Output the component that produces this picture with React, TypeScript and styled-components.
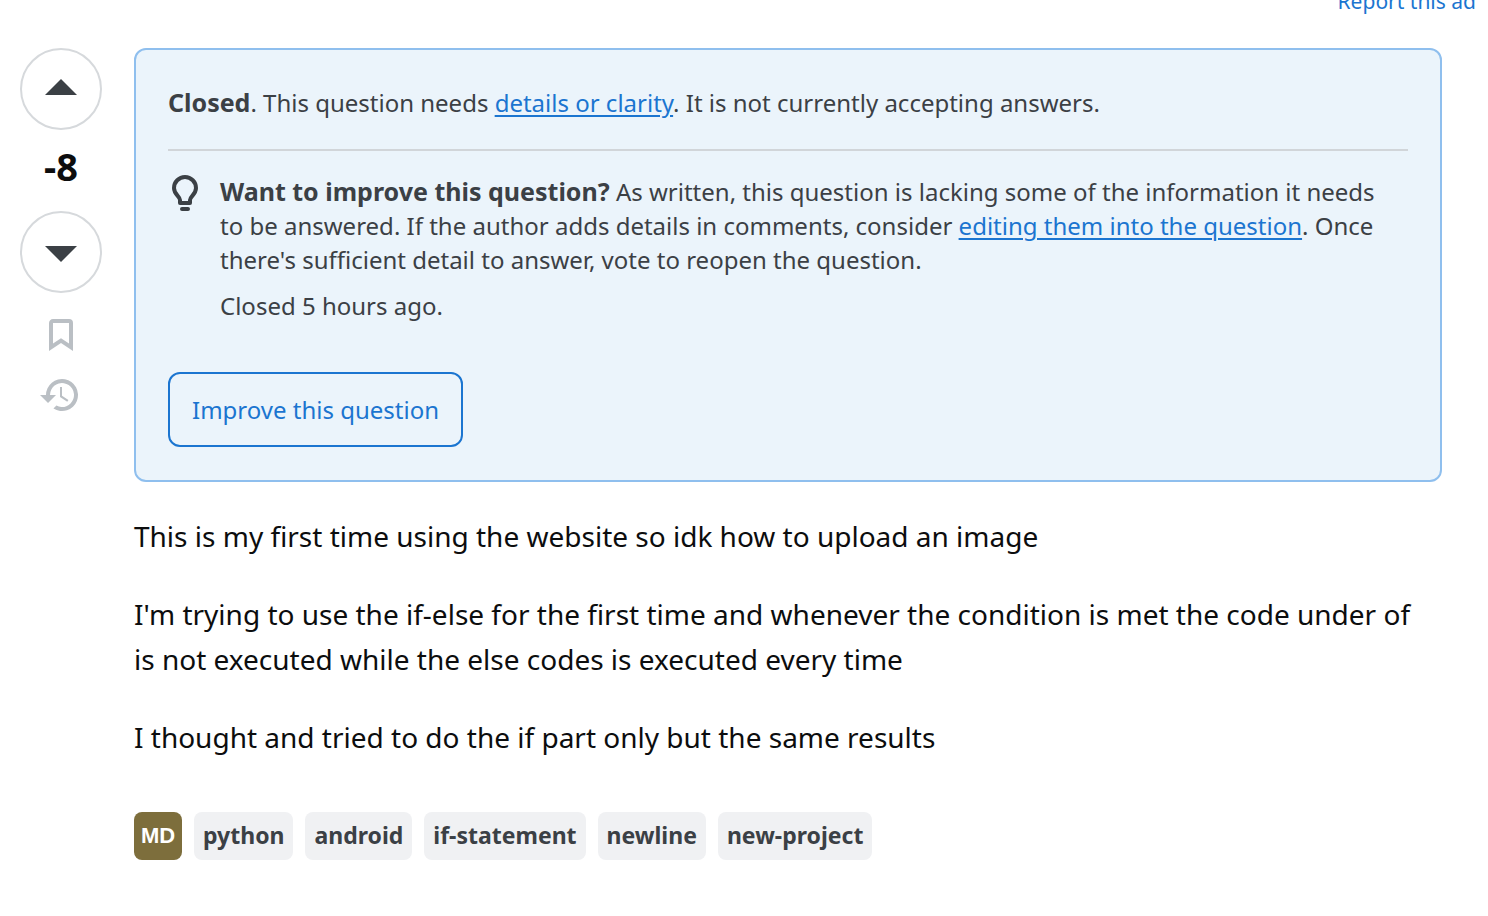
import React from "react";
import styled, { createGlobalStyle } from "styled-components";

const GlobalStyle = createGlobalStyle`
  *, *::before, *::after { box-sizing: border-box; }
  body {
    margin: 0;
    background: #fff;
    color: #0c0d0e;
    font-family: "Segoe UI", "Noto Sans", "Open Sans", sans-serif;
  }
`;

const AdBar = styled.div`
  display: flex;
  justify-content: flex-end;
  align-items: flex-end;
  height: 16px;
  padding-right: 12px;
  overflow: hidden;
`;

const AdLink = styled.a`
  color: #1b75d0;
  font-size: 21px;
  line-height: 30px;
  text-decoration: none;
`;

const Question = styled.main`
  display: grid;
  grid-template-columns: 82px minmax(0, 1fr);
  column-gap: 32px;
  padding: 32px 46px 32px 20px;
`;

const VoteColumn = styled.div`
  display: flex;
  flex-direction: column;
  align-items: center;
`;

const VoteButton = styled.button`
  display: flex;
  align-items: center;
  justify-content: center;
  width: 82px;
  height: 82px;
  padding: 0;
  border: 2px solid #d6d9dc;
  border-radius: 50%;
  background: #fff;
  color: #3b4045;
  cursor: pointer;
`;

const Score = styled.div`
  padding: 12px 0 21px;
  font-size: 38px;
  font-weight: 700;
  line-height: 48px;
`;

const IconButton = styled.button`
  display: flex;
  padding: 12px 0;
  border: 0;
  background: none;
  color: #babfc4;
  cursor: pointer;

  ${VoteButton} + & {
    margin-top: 12px;
  }
`;

const Icon = styled.svg`
  display: block;
  flex: none;
  fill: currentColor;
`;

const Notice = styled.aside`
  padding: 36px 32px 33px;
  border: 2px solid #8fbfee;
  border-radius: 12px;
  background: #ebf4fb;
  color: #3b4045;
  font-size: 24px;
  line-height: 34px;
`;

const NoticeText = styled.p`
  margin: 0;
`;

const Lead = styled.b`
  font-size: 25px;
  line-height: 30px;
`;

const Divider = styled.hr`
  height: 2px;
  margin: 29px 0 24px;
  border: 0;
  background: #d1d5d9;
`;

const Advice = styled.div`
  display: flex;
  gap: 16px;
  padding-right: 24px;
`;

const AdviceBody = styled.div`
  display: grid;
  gap: 12px;
  min-width: 0;
`;

const TextLink = styled.a`
  color: #1b75d0;
  text-decoration: underline;
  text-decoration-thickness: 2px;
  text-underline-offset: 3px;
`;

const ImproveButton = styled.button`
  height: 75px;
  margin-top: 49px;
  padding: 0 22px;
  border: 2px solid #1b75d0;
  border-radius: 12px;
  background: transparent;
  color: #1b75d0;
  font: inherit;
  cursor: pointer;
`;

const Post = styled.div`
  padding: 32px 8px 0 0;
  font-size: 28px;
  line-height: 45px;
`;

const Paragraph = styled.p`
  margin: 0 0 33px;
`;

const Tags = styled.div`
  display: flex;
  flex-wrap: wrap;
  gap: 12px;
  padding-top: 19px;
`;

const Badge = styled.a`
  width: 48px;
  border-radius: 8px;
  background: #7d6e3c;
  color: #fff;
  font-family: "Liberation Sans", sans-serif;
  font-size: 22px;
  font-weight: 700;
  line-height: 48px;
  text-align: center;
  text-decoration: none;
`;

const Tag = styled.a`
  padding: 0 9px 2px;
  border-radius: 8px;
  background: #f0f1f3;
  color: #3b4045;
  font-size: 23px;
  font-weight: 700;
  line-height: 46px;
  text-decoration: none;
`;

const tags = ["python", "android", "if-statement", "newline", "new-project"];

export default function App() {
  return (
    <>
      <GlobalStyle />
      <AdBar>
        <AdLink href="#report">Report this ad</AdLink>
      </AdBar>
      <Question>
        <VoteColumn>
          <VoteButton aria-label="Up vote">
            <Icon width="36" height="36" viewBox="0 0 18 18"><path d="M1 12h16L9 4l-8 8Z" /></Icon>
          </VoteButton>
          <Score>-8</Score>
          <VoteButton aria-label="Down vote">
            <Icon width="36" height="36" viewBox="0 0 18 18"><path d="M1 6h16l-8 8-8-8Z" /></Icon>
          </VoteButton>
          <IconButton aria-label="Save">
            <Icon width="36" height="36" viewBox="0 0 18 18">
              <path d="m9 10.6 4 2.66V3H5v10.26l4-2.66ZM3 17V3c0-1.1.9-2 2-2h8a2 2 0 0 1 2 2v14l-6-4-6 4Z" />
            </Icon>
          </IconButton>
          <IconButton aria-label="Timeline">
            <Icon width="42" height="36" viewBox="0 0 21 18">
              <path d="M3 9a8 8 0 1 1 3.73 6.77L8.2 14.3A6 6 0 1 0 5 9l3.01-.01-4 4-4-4h3L3 9Zm7-4h1.01L11 9.36l3.22 2.1-.6.93L10 10V5Z" />
            </Icon>
          </IconButton>
        </VoteColumn>
        <div>
          <Notice>
            <NoticeText>
              <Lead>Closed</Lead>. This question needs <TextLink href="#details">details or clarity</TextLink>. It is
              not currently accepting answers.
            </NoticeText>
            <Divider />
            <Advice>
              <Icon width="36" height="36" viewBox="0 0 36 36">
                <path
                  d="M12 28v-3C12 21.500 6 19.500 6 13a11 11 0 0 1 22 0c0 6.500-6 8.500-6 12v3Z"
                  fill="none"
                  stroke="currentColor"
                  strokeWidth="4"
                  strokeLinejoin="round"
                />
                <rect x="12" y="32" width="10" height="4" rx="2" />
              </Icon>
              <AdviceBody>
                <NoticeText>
                  <Lead>Want to improve this question?</Lead> As written, this question is lacking some of the
                  information it needs to be answered. If the author adds details in comments, consider{" "}
                  <TextLink href="#edit">editing them into the question</TextLink>. Once there's sufficient detail to
                  answer, vote to reopen the question.
                </NoticeText>
                <NoticeText>Closed 5 hours ago.</NoticeText>
              </AdviceBody>
            </Advice>
            <ImproveButton>Improve this question</ImproveButton>
          </Notice>
          <Post>
            <Paragraph>This is my first time using the website so idk how to upload an image</Paragraph>
            <Paragraph>
              I'm trying to use the if-else for the first time and whenever the condition is met the code under of is
              not executed while the else codes is executed every time
            </Paragraph>
            <Paragraph>I thought and tried to do the if part only but the same results</Paragraph>
          </Post>
          <Tags>
            <Badge href="#md">MD</Badge>
            {tags.map((tag) => (
              <Tag key={tag} href={`#${tag}`}>{tag}</Tag>
            ))}
          </Tags>
        </div>
      </Question>
    </>
  );
}
